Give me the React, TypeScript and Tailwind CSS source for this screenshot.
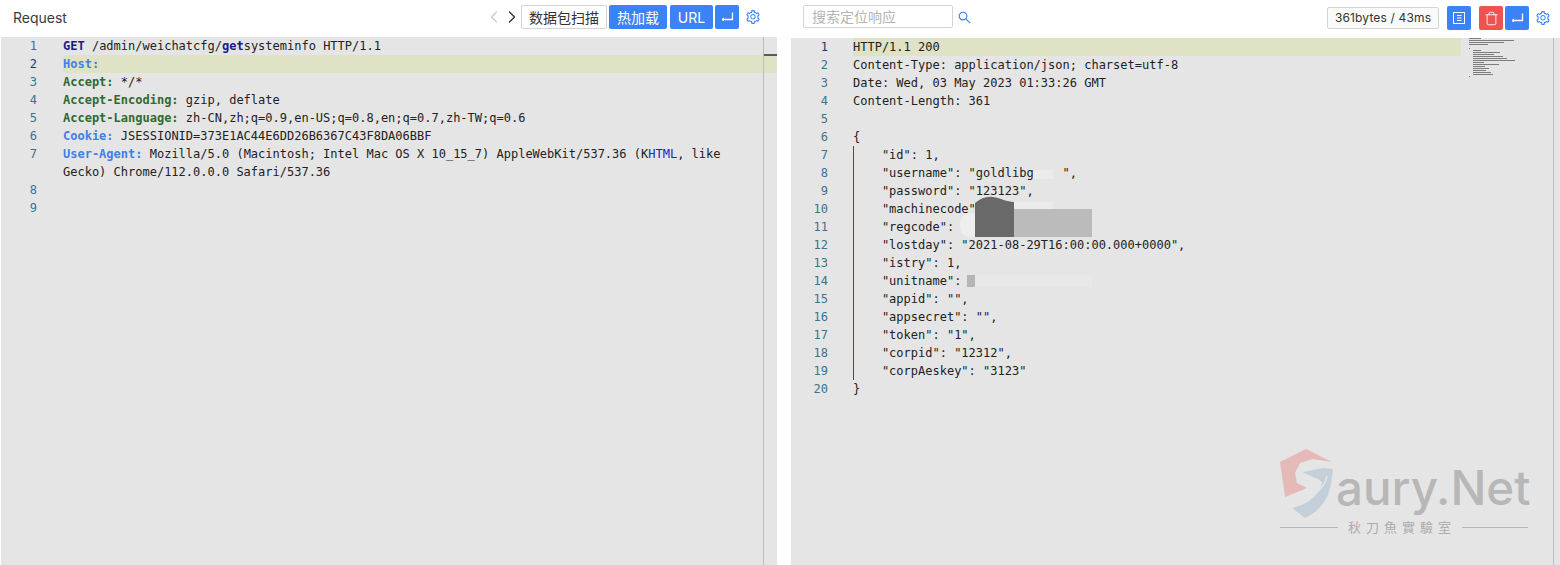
import { ChevronLeft, ChevronRight, Trash } from "lucide-react";
import { AiOutlineSearch, AiOutlineSetting } from "react-icons/ai";

const mono = "font-['DejaVu_Sans_Mono','Liberation_Mono',monospace] text-[12px] leading-[18px]";
const btn = "h-[24px] rounded-[2px] bg-[#3b82f6] text-white flex items-center justify-center";

const g = "text-[#2f6b2f] font-bold";
const b = "text-[#3f7fe8] font-bold";

const reqLines = [
  { n: "1", c: <><span className="font-bold text-[#1a1a8c]">GET</span> /admin/weichatcfg/<span className="font-bold text-[#1a1a8c]">get</span>systeminfo HTTP/1.1</> },
  { n: "2", c: <span className={b}>Host:</span>, hl: true },
  { n: "3", c: <><span className={g}>Accept:</span> */*</> },
  { n: "4", c: <><span className={g}>Accept-Encoding:</span> gzip, deflate</> },
  { n: "5", c: <><span className={g}>Accept-Language:</span> zh-CN,zh;q=0.9,en-US;q=0.8,en;q=0.7,zh-TW;q=0.6</> },
  { n: "6", c: <><span className={b}>Cookie:</span> JSESSIONID=373E1AC44E6DD26B6367C43F8DA06BBF</> },
  { n: "7", c: <><span className={b}>User-Agent:</span> Mozilla/5.0 (Macintosh; Intel Mac OS X 10_15_7) AppleWebKit/537.36 (K<span className="text-[#2222cc]">HTML</span>, like</> },
  { n: "", c: "Gecko) Chrome/112.0.0.0 Safari/537.36" },
  { n: "8", c: "" },
  { n: "9", c: "" },
];

const resLines = [
  "HTTP/1.1 200",
  "Content-Type: application/json; charset=utf-8",
  "Date: Wed, 03 May 2023 01:33:26 GMT",
  "Content-Length: 361",
  "",
  "{",
  '    "id": 1,',
  '    "username": "goldlibg    ",',
  '    "password": "123123",',
  '    "machinecode"',
  '    "regcode":',
  '    "lostday": "2021-08-29T16:00:00.000+0000",',
  '    "istry": 1,',
  '    "unitname":',
  '    "appid": "",',
  '    "appsecret": "",',
  '    "token": "1",',
  '    "corpid": "12312",',
  '    "corpAeskey": "3123"',
  "}",
];

function Gear() {
  return <AiOutlineSetting size={16} className="text-[#3b82f6]" />;
}

function EnterIcon() {
  return (
    <svg width="14" height="14" viewBox="0 0 14 14" fill="none" stroke="white" strokeWidth="1.3">
      <path d="M12.5 2.5V9.5H2" />
      <path d="M4 8L2 9.5L4 11" strokeWidth="1" />
    </svg>
  );
}

function Logo() {
  return (
    <div className="absolute left-[1280px] top-[449px] w-[250px] h-[90px]">
      <svg width="54" height="72" viewBox="0 0 54 72" className="absolute left-0 top-0">
        <path d="M0 13 L26 0 L52 13 L33 10 L20 14 L15 24 L17 34 L27 39 L5 48 Z" fill="#e6b9b9" />
        <path d="M23 23 L43 19 L53 20 C52 32 50 40 48 46 C42 58 34 65 25 69 L12 59 C24 56 38 50 42 34 C42 30 30 28 23 23 Z" fill="#c3d0da" />
        <path d="M15 54 C30 49 44 42 47 27" fill="none" stroke="#e5e5e5" strokeWidth="1.5" />
      </svg>
      <div className="absolute left-[56px] top-[14px] font-['Inter',sans-serif] text-[47.5px] leading-[50px] font-medium text-[#b7b7b7] whitespace-nowrap">aury.Net</div>
      <div className="absolute left-0 top-[70px] w-[250px] flex items-center gap-[10px]">
        <div className="h-px w-[58px] bg-[#b5b5b5]" />
        <div className="font-['Noto_Sans_CJK_TC',serif] w-[104px] text-[13px] tracking-[5px] text-[#acacac] whitespace-nowrap leading-[16px]">秋刀魚實驗室</div>
        <div className="h-px w-[66px] bg-[#b5b5b5]" />
      </div>
    </div>
  );
}

export default function App() {
  return (
    <div className="relative w-[1560px] h-[565px] flex bg-white overflow-hidden font-['Inter','Noto_Sans_CJK_SC',sans-serif] text-[#333]">
      {/* request */}
      <div className="w-[777px] shrink-0 flex flex-col bg-white">
        <div className="h-[37px] shrink-0 flex items-center pb-[3px] pl-[13px] pr-[16px]">
          <div className="text-[14px] text-[#3b3b3b] flex-1">Request</div>
          <ChevronLeft size={20} strokeWidth={1.3} className="text-[#c4c4c4] mr-[-2px]" />
          <ChevronRight size={20} strokeWidth={1.6} className="text-[#333] mr-[-1px]" />
          <div className="h-[24px] w-[86px] border border-[#d4d4d4] rounded-[2px] text-[14px] flex items-center justify-center mr-[2px]">数据包扫描</div>
          <div className={`${btn} w-[58px] text-[14px] mr-[3px]`}>热加载</div>
          <div className={`${btn} w-[43px] text-[14px] mr-[2px]`}>URL</div>
          <div className={`${btn} w-[24px] mr-[6px]`}><EnterIcon /></div>
          <Gear />
        </div>
        <div className={`flex-1 ml-px bg-[#e5e5e5] flex ${mono}`}>
          <div className="flex-1">
            {reqLines.map((l, i) => (
              <div key={i} className="flex h-[18px] text-[#222]">
                <div className={`w-[36px] shrink-0 text-right ${l.hl ? "text-[#1c3a6b]" : "text-[#3a7390]"}`}>{l.n}</div>
                <div className={`ml-[26px] flex-1 whitespace-pre ${l.hl ? "bg-[#dfe2c4]" : ""}`}>{l.c}</div>
              </div>
            ))}
          </div>
          <div className="w-[14px] shrink-0 border-l border-[#bdbdbd] relative">
            <div className="absolute top-[18px] left-0 right-0 h-[18px] bg-[#dfe2c4]" />
            <div className="absolute top-[17px] left-0 right-0 h-[2px] bg-[#5a5a5a]" />
          </div>
        </div>
      </div>
      <div className="w-[13px] shrink-0 bg-white" />
      {/* response */}
      <div className="flex-1 flex flex-col bg-white">
        <div className="h-[38px] shrink-0 flex items-center pb-[2px] pl-[13px] pr-[9px]">
          <div className="h-[23px] w-[150px] mb-[3px] border border-[#d4d4d4] rounded-[2px] text-[14px] text-[#b5b5b5] flex items-center pl-[8px]">搜索定位响应</div>
          <AiOutlineSearch size={15} className="text-[#3b82f6] ml-[4px] mb-[2px]" />
          <div className="flex-1" />
          <div className="h-[22px] w-[112px] border border-[#d4d4d4] rounded-[2px] bg-[#fafafa] text-[12px] tracking-[0.15px] flex items-center justify-center mr-[8px]">361bytes / 43ms</div>
          <div className={`${btn} w-[24px] mr-[8px]`}>
            <svg width="14" height="14" viewBox="0 0 14 14" fill="none" stroke="white" strokeWidth="1">
              <rect x="1.5" y="1.5" width="11" height="11" />
              <path d="M5 4.5h4.5M5 7h4.5M5 9.5h4.5" strokeWidth="1.2" />
            </svg>
          </div>
          <div className="h-[24px] w-[24px] rounded-[2px] bg-[#ef5350] text-white flex items-center justify-center mr-[2px]"><Trash size={15} strokeWidth={1.4} /></div>
          <div className={`${btn} w-[24px] mr-[6px]`}><EnterIcon /></div>
          <Gear />
        </div>
        <div className={`flex-1 ml-px bg-[#e5e5e5] flex relative ${mono}`}>
          <div className="flex-1">
            {resLines.map((l, i) => (
              <div key={i} className="flex h-[18px] text-[#222]">
                <div className={`w-[37px] shrink-0 text-right ${i === 0 ? "text-[#1c3a6b]" : "text-[#3a7390]"}`}>{i + 1}</div>
                <div className={`ml-[25px] whitespace-pre flex-1 ${i === 0 ? "bg-[#dfe2c4]" : ""} ${i >= 6 && i <= 18 ? "bg-[linear-gradient(#5c4a38,#5c4a38)] bg-no-repeat bg-[length:1px_100%]" : ""}`}>{l}</div>
              </div>
            ))}
          </div>
          {/* minimap */}
          <div className="w-[92px] shrink-0 pl-[8px]">
            {resLines.map((l, i) => {
              const indent = l.length - l.trimStart().length;
              const len = i === 9 ? 30 : i === 10 ? 34 : i === 13 ? 26 : l.trim().length;
              return (
                <div key={i} className="h-[2px] flex">
                  <div style={{ width: len, marginLeft: indent }} className="h-px bg-[#7d7d7d]" />
                </div>
              );
            })}
          </div>
          <div className="w-px shrink-0 bg-[#bdbdbd] mr-[6px]" />
          {/* blurred-out values */}
          <div className="absolute left-[169px] top-[175px] w-[20px] h-[24px] bg-[#eeeeee] rounded-l-[10px]" />
          <div className="absolute left-[223px] top-[164px] w-[39px] h-[8px] bg-[#ebebeb]" />
          <svg width="39" height="41" viewBox="0 0 39 41" className="absolute left-[184px] top-[158px]">
            <path d="M0 41V7C6 2 12 0 18 1C26 2 32 6 39 6V41Z" fill="#696969" />
          </svg>
          <div className="absolute left-[223px] top-[171px] w-[78px] h-[28px] bg-[#bbbbbb]" />
          <div className="absolute left-[176px] top-[237px] w-[8px] h-[12px] bg-[#b5b5b5]" />
          <div className="absolute left-[184px] top-[237px] w-[117px] h-[12px] bg-[#e8e8e8]" />
          <div className="absolute left-[242px] top-[132px] w-[20px] h-[9px] bg-[#ebebeb]" />
        </div>
      </div>
      <Logo />
    </div>
  );
}
